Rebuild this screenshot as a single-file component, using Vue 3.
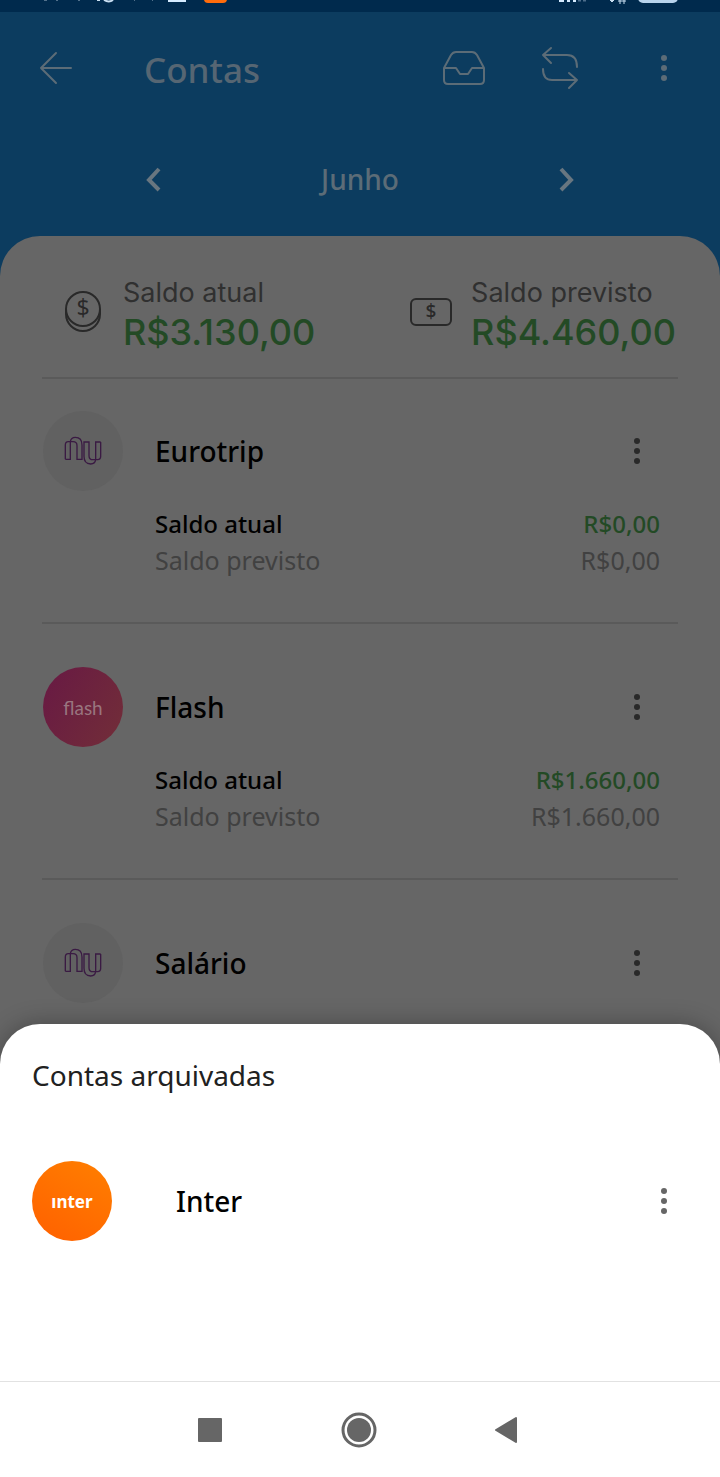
<script setup>
const accounts = [
  { name: 'Eurotrip', brand: 'nu', current: 'R$0,00', expected: 'R$0,00' },
  { name: 'Flash', brand: 'flash', current: 'R$1.660,00', expected: 'R$1.660,00' },
  { name: 'Salário', brand: 'nu' },
]
</script>

<template>
  <div class="screen">
    <header class="top">
      <div class="status" aria-hidden="true">
        <svg width="240" height="12" viewBox="0 0 240 12">
          <path d="M44 0h3M56 0h2M78 0h2M134 0h1M152 0h1" stroke="#52718c" stroke-width="2" />
          <path d="M97 0h3M104 0q5 3 9 0" stroke="#c9dff2" stroke-width="2" fill="none" />
          <rect x="168" y="-8" width="18" height="10" fill="#d5ebff" />
          <rect x="204" y="-12" width="23" height="15" rx="4" fill="#ff6c0c" />
        </svg>
        <svg width="180" height="12" viewBox="0 0 180 12">
          <path d="M19 0h5M27 0h3M33 0h3" stroke="#d5ebff" stroke-width="4" />
          <path d="M38 0h3M43 0h3" stroke="#4c6d8b" stroke-width="3" />
          <path d="M70 0l2 2 2-2zM80 0v4M84 0v4M78 1h8" stroke="#c9dff2" fill="#c9dff2" />
          <rect x="98" y="-12" width="40" height="15" rx="5" fill="#b8d3ec" />
        </svg>
      </div>

      <div class="toolbar">
        <button class="icon-btn" aria-label="Voltar">
          <svg width="36" height="36" viewBox="0 0 36 36" class="line">
            <path d="M33 18H3M18 3L3 18l15 15" />
          </svg>
        </button>
        <h1>Contas</h1>
        <button class="icon-btn" aria-label="Arquivadas">
          <svg width="44" height="40" viewBox="0 0 44 40" class="line">
            <path d="M2 20L9 7q2-3 5-3h16q3 0 5 3l7 13v12q0 4-4 4H6q-4 0-4-4zM2 20h12l4 6h8l4-6h12" />
          </svg>
        </button>
        <button class="icon-btn swap" aria-label="Transferir">
          <svg width="44" height="44" viewBox="0 0 44 44" class="line">
            <path d="M13 2L5 9l8 8M5 9h24q10 0 10 12M31 27l8 7-8 8M39 34H14Q5 34 5 23" />
          </svg>
        </button>
        <button class="icon-btn" aria-label="Mais opções">
          <svg width="32" height="32" viewBox="0 0 32 32" fill="#5c6c77">
            <circle cx="16" cy="6" r="3" /><circle cx="16" cy="16" r="3" /><circle cx="16" cy="26" r="3" />
          </svg>
        </button>
      </div>

      <div class="month">
        <button class="icon-btn" aria-label="Mês anterior">
          <svg width="32" height="32" viewBox="0 0 32 32" class="chevron"><path d="M22 6L12 17l10 10" /></svg>
        </button>
        <span>Junho</span>
        <button class="icon-btn" aria-label="Próximo mês">
          <svg width="32" height="32" viewBox="0 0 32 32" class="chevron"><path d="M10 6l10 11-10 10" /></svg>
        </button>
      </div>
    </header>

    <div class="panel-back">
      <main class="panel">
        <section class="summary">
          <div class="total">
            <svg width="44" height="44" viewBox="0 0 44 44" class="coin">
              <circle cx="22" cy="19" r="17" />
              <path d="M5 19v5a17 17 0 0 0 34 0v-5" />
              <text x="22" y="26" text-anchor="middle">$</text>
            </svg>
            <div>
              <p class="label">Saldo atual</p>
              <p class="sum">R$3.130,00</p>
            </div>
          </div>
          <div class="total">
            <svg width="44" height="44" viewBox="0 0 44 44" class="coin note">
              <rect x="2" y="9" width="40" height="26" rx="5" />
              <text x="22" y="28" text-anchor="middle">$</text>
            </svg>
            <div>
              <p class="label">Saldo previsto</p>
              <p class="sum">R$4.460,00</p>
            </div>
          </div>
        </section>

        <article v-for="account in accounts" :key="account.name" class="account">
          <div class="head">
            <div class="avatar" :class="account.brand">
              <svg v-if="account.brand === 'nu'" width="80" height="80" viewBox="0 0 240 240">
                <g fill="none" stroke="#3a1a43" stroke-width="4">
                  <path d="M67 145V102Q67 92 76 92H90Q102 92 102 104V145H117V102Q117 79 97 79Q84 79 82 92V145H67" />
                  <path transform="rotate(180 120 119)" d="M67 145V102Q67 92 76 92H90Q102 92 102 104V145H117V102Q117 79 97 79Q84 79 82 92V145H67" />
                </g>
              </svg>
              <span v-else>flash</span>
            </div>
            <h2>{{ account.name }}</h2>
            <button class="icon-btn" :aria-label="'Opções de ' + account.name">
              <svg width="32" height="32" viewBox="0 0 32 32" fill="#292929">
                <circle cx="16" cy="6" r="3" /><circle cx="16" cy="16" r="3" /><circle cx="16" cy="26" r="3" />
              </svg>
            </button>
          </div>
          <dl v-if="account.current">
            <div class="current"><dt>Saldo atual</dt><dd>{{ account.current }}</dd></div>
            <div class="expected"><dt>Saldo previsto</dt><dd>{{ account.expected }}</dd></div>
          </dl>
        </article>
      </main>
    </div>

    <section class="sheet">
      <h2>Contas arquivadas</h2>
      <div class="archived">
        <div class="avatar inter"><span>ınter</span></div>
        <h3>Inter</h3>
        <button class="icon-btn" aria-label="Opções de Inter">
          <svg width="32" height="32" viewBox="0 0 32 32" fill="#666">
            <circle cx="16" cy="6" r="3" /><circle cx="16" cy="16" r="3" /><circle cx="16" cy="26" r="3" />
          </svg>
        </button>
      </div>
    </section>

    <nav class="system">
      <button class="icon-btn" aria-label="Recentes">
        <svg width="36" height="36" viewBox="0 0 36 36" fill="#666"><rect x="6" y="6" width="24" height="24" rx="1" /></svg>
      </button>
      <button class="icon-btn" aria-label="Início">
        <svg width="36" height="36" viewBox="0 0 36 36" fill="#666">
          <circle cx="18" cy="18" r="12" />
          <circle cx="18" cy="18" r="16" fill="none" stroke="#666" stroke-width="3" />
        </svg>
      </button>
      <button class="icon-btn" aria-label="Voltar do sistema">
        <svg width="36" height="36" viewBox="0 0 36 36" fill="#666" stroke="#666" stroke-width="2" stroke-linejoin="round">
          <path d="M26 6v24L6 18z" />
        </svg>
      </button>
    </nav>
  </div>
</template>

<style>
body { margin: 0; }
</style>

<style scoped>
.screen {
  display: flex;
  flex-direction: column;
  min-height: 100vh;
  background: #666;
  font-family: "Noto Sans", "Open Sans", sans-serif;
}
h1, h2, h3, p, dl, dd { margin: 0; }
h2, h3 { font-size: 28px; font-weight: 500; line-height: 38px; }
svg { display: block; }
.icon-btn {
  display: block;
  flex: none;
  padding: 0;
  border: 0;
  background: none;
}
.top, .panel-back { background: #0c3c5f; }
.status {
  display: flex;
  justify-content: space-between;
  height: 12px;
  background: #002a4d;
}
.toolbar {
  display: flex;
  align-items: center;
  height: 112px;
  padding: 0 40px 0 38px;
}
.toolbar h1 {
  flex: 1;
  margin-left: 70px;
  padding-top: 4px;
  color: #566673;
  font-size: 35px;
  font-weight: 500;
  line-height: 48px;
}
.line { fill: none; stroke: #5c6c77; stroke-width: 2; stroke-linecap: round; stroke-linejoin: round; }
.swap { margin: 0 66px 0 52px; }
.month {
  display: flex;
  align-items: center;
  justify-content: space-between;
  height: 110px;
  padding: 0 19% 2px;
  color: #5c6c77;
  font-size: 28px;
  font-weight: 500;
}
.chevron { fill: none; stroke: #687680; stroke-width: 4; }
.panel {
  padding: 0 42px 21px;
  border-radius: 40px 40px 0 0;
  background: #666;
}
.summary {
  display: flex;
  justify-content: space-between;
  box-sizing: border-box;
  height: 143px;
  padding: 0 2px 0 19px;
  border-bottom: 2px solid #5a5a5a;
}
.total { display: flex; align-items: flex-start; gap: 18px; padding-top: 38px; }
.coin { margin-top: 16px; fill: none; stroke: #292929; stroke-width: 2; }
.coin text { fill: #292929; stroke: none; font-size: 23px; }
.coin.note text { font-size: 19px; font-weight: 500; }
.label, .sum { font-family: Inter, "Noto Sans", sans-serif; font-weight: 500; }
.label { color: #303030; font-size: 27px; font-weight: 400; line-height: 38px; }
.sum { color: #234a25; font-size: 36px; line-height: 40px; }
.account { padding: 43px 0; border-bottom: 2px solid #5a5a5a; }
.summary + .account { padding-top: 32px; }
.account:last-child { padding-bottom: 0; border-bottom: 0; }
.head { display: flex; align-items: center; padding: 0 25px 0 1px; }
.head h2 { flex: 1; margin-left: 32px; }
.avatar {
  display: grid;
  place-items: center;
  flex: none;
  width: 80px;
  height: 80px;
  border-radius: 50%;
}
.nu { background: #616161; }
.flash {
  background: linear-gradient(120deg, #681944, #722e38);
  color: #99757f;
  font-family: Lato, sans-serif;
  font-size: 19px;
}
dl { padding: 15px 18px 1px 113px; font-size: 24px; line-height: 36px; }
dl div { display: flex; justify-content: space-between; }
.current { font-weight: 500; }
.current dd { color: #234a25; }
.expected { color: #414141; font-size: 25px; }
.sheet {
  flex: 1;
  padding: 32px 40px 32px 32px;
  border-radius: 40px 40px 0 0;
  background: #fff;
  box-shadow: 0 0 24px rgb(0 0 0 / 30%);
}
.sheet h2 { color: #212121; font-weight: 400; }
.archived { display: flex; align-items: center; margin-top: 67px; }
.archived h3 { flex: 1; margin-left: 64px; }
.inter {
  background: linear-gradient(30deg, #ff6000, #ff7f00);
  color: #fff;
  font-size: 17px;
  font-weight: 700;
}
.system {
  z-index: 1;
  display: flex;
  align-items: center;
  justify-content: space-between;
  height: 95px;
  padding: 0 194px 0 192px;
  border-top: 1px solid #e2e2e2;
  background: #fff;
}
</style>
